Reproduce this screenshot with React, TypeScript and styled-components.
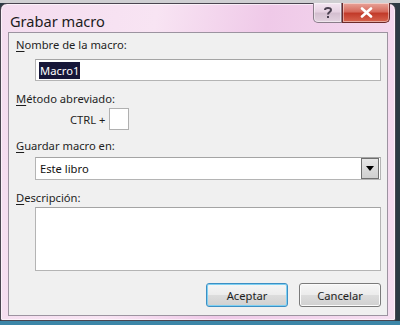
import React from "react";
import styled, { createGlobalStyle } from "styled-components";

const Global = createGlobalStyle`
  html, body { margin: 0; padding: 0; }
  body {
    width: 400px; height: 325px; overflow: hidden;
    background: linear-gradient(180deg, #cfcfd2 0px, #cfcfd2 3px, #2d3a44 3px, #2d3a44 321px, #3c86a8 321px);
    font-family: "Noto Sans", "DejaVu Sans", sans-serif;
  }
`;

const Window = styled.div`
  box-sizing: border-box;
  margin-top: 3px;
  width: 396px;
  height: 318px;
  border: 1px solid #4a4550;
  border-radius: 7px 7px 2px 2px;
  background: linear-gradient(100deg, #f4dcef 0%, #f8e4f3 35%, #efc9e8 60%, #f6dff1 100%);
  box-shadow: inset 0 0 0 1px rgba(255,255,255,0.6);
  display: flex;
  flex-direction: column;
  padding: 0 7px 4px 7px;
`;

const TitleBar = styled.div`
  height: 28px;
  display: flex;
  align-items: flex-start;
  justify-content: space-between;
`;

const Title = styled.div`
  padding: 7px 0 0 2px;
  font-family: "Noto Sans", sans-serif;
  font-size: 14.6px;
  color: #1c1c1c;
`;

const Caption = styled.div`
  display: flex;
  margin-right: -2px;
  margin-top: -1px;
`;

const CapBtn = styled.div<{ $close?: boolean }>`
  box-sizing: border-box;
  height: 20px;
  width: ${(p) => (p.$close ? "48px" : "29px")};
  border: 1px solid ${(p) => (p.$close ? "#6b2a2a" : "#8a7d8a")};
  border-top: none;
  border-radius: ${(p) => (p.$close ? "0 0 5px 0" : "0 0 0 5px")};
  background: ${(p) =>
    p.$close
      ? "linear-gradient(180deg, #e8a49a 0%, #d66a5c 45%, #c23b2a 55%, #d7644f 100%)"
      : "linear-gradient(180deg, #f4e6f2 0%, #e6d2e2 45%, #d4bfd0 55%, #e3d3e0 100%)"};
  display: flex;
  align-items: center;
  justify-content: center;
  box-shadow: inset 0 0 0 1px rgba(255,255,255,0.45);
`;

const Client = styled.div`
  box-sizing: border-box;
  flex: 1;
  background: #f0f0f0;
  border: 1px solid #9c93a0;
  display: flex;
  flex-direction: column;
  padding: 4px 6px 0 7px;
`;

const Label = styled.div<{ $mt: number }>`
  margin-top: ${(p) => p.$mt}px;
  font-size: 11.2px;
  line-height: 16px;
  color: #1e1e1e;
  u { text-decoration: underline; text-underline-offset: 2px; }
`;

const Field = styled.div<{ $mt: number; $h: number }>`
  box-sizing: border-box;
  margin-top: ${(p) => p.$mt}px;
  margin-left: 19px;
  height: ${(p) => p.$h}px;
  background: #fff;
  border: 1px solid #b4b4b4;
  border-top-color: #a4a4a4;
  display: flex;
  align-items: center;
  padding-left: 3px;
  font-size: 11.2px;
  color: #111;
`;

const Selected = styled.span`
  background: #161638;
  color: #fff;
  padding: 1px 1px;
  line-height: 15px;
`;

const ShortcutRow = styled.div`
  margin-top: 1px;
  margin-left: 54px;
  display: flex;
  align-items: center;
  gap: 4px;
  font-size: 11.2px;
  color: #1e1e1e;
`;

const KeyBox = styled.div`
  box-sizing: border-box;
  width: 20px;
  height: 22px;
  background: #fff;
  border: 1px solid #b0b0b0;
`;

const SelectText = styled.span`
  flex: 1;
  padding-left: 1px;
`;

const DropBtn = styled.div`
  box-sizing: border-box;
  width: 18px;
  height: 21px;
  margin-right: 1px;
  background: linear-gradient(180deg, #e6e6e6, #cfcfcf);
  border: 1px solid #6f6f6f;
  display: flex;
  align-items: center;
  justify-content: center;
`;

const Buttons = styled.div`
  margin-top: 12px;
  display: flex;
  justify-content: flex-end;
  gap: 11px;
`;

const Btn = styled.div<{ $def?: boolean }>`
  box-sizing: border-box;
  width: 82px;
  height: 24px;
  border-radius: 3px;
  border: 1px solid ${(p) => (p.$def ? "#3c8fc4" : "#7a7a7a")};
  background: linear-gradient(180deg, #f6f6f6 0%, #ececec 48%, #dcdcdc 52%, #d0d0d0 100%);
  box-shadow: inset 0 0 0 1px ${(p) => (p.$def ? "#7fd0f2" : "#fbfbfb")};
  display: flex;
  align-items: center;
  justify-content: center;
  font-size: 11.2px;
  color: #1e1e1e;
`;

export default function App() {
  return (
    <>
      <Global />
      <Window>
        <TitleBar>
          <Title>Grabar macro</Title>
          <Caption>
            <CapBtn>
              <svg width="10" height="13" viewBox="0 0 10 13">
                <path d="M2 4 C2 1.5 8 1.2 8 4 C8 6 5 6 5 8.5" fill="none" stroke="#4a4050" strokeWidth="2" />
                <rect x="4" y="10" width="2" height="2" fill="#4a4050" />
              </svg>
            </CapBtn>
            <CapBtn $close>
              <svg width="13" height="11" viewBox="0 0 13 11">
                <path d="M2 1.5 L11 9.5 M11 1.5 L2 9.5" stroke="#fff" strokeWidth="2.6" strokeLinecap="round" />
              </svg>
            </CapBtn>
          </Caption>
        </TitleBar>
        <Client>
          <Label $mt={0}><u>N</u>ombre de la macro:</Label>
          <Field $mt={6} $h={22}><Selected>Macro1</Selected></Field>
          <Label $mt={10}><u>M</u>étodo abreviado:</Label>
          <ShortcutRow>
            <span>CTRL +</span>
            <KeyBox />
          </ShortcutRow>
          <Label $mt={8}><u>G</u>uardar macro en:</Label>
          <Field $mt={3} $h={23}>
            <SelectText>Este libro</SelectText>
            <DropBtn>
              <svg width="8" height="5" viewBox="0 0 8 5"><path d="M0 0 H8 L4 5 Z" fill="#000" /></svg>
            </DropBtn>
          </Field>
          <Label $mt={10}><u>D</u>escripción:</Label>
          <Field $mt={1} $h={64} />
          <Buttons>
            <Btn $def>Aceptar</Btn>
            <Btn>Cancelar</Btn>
          </Buttons>
        </Client>
      </Window>
    </>
  );
}
